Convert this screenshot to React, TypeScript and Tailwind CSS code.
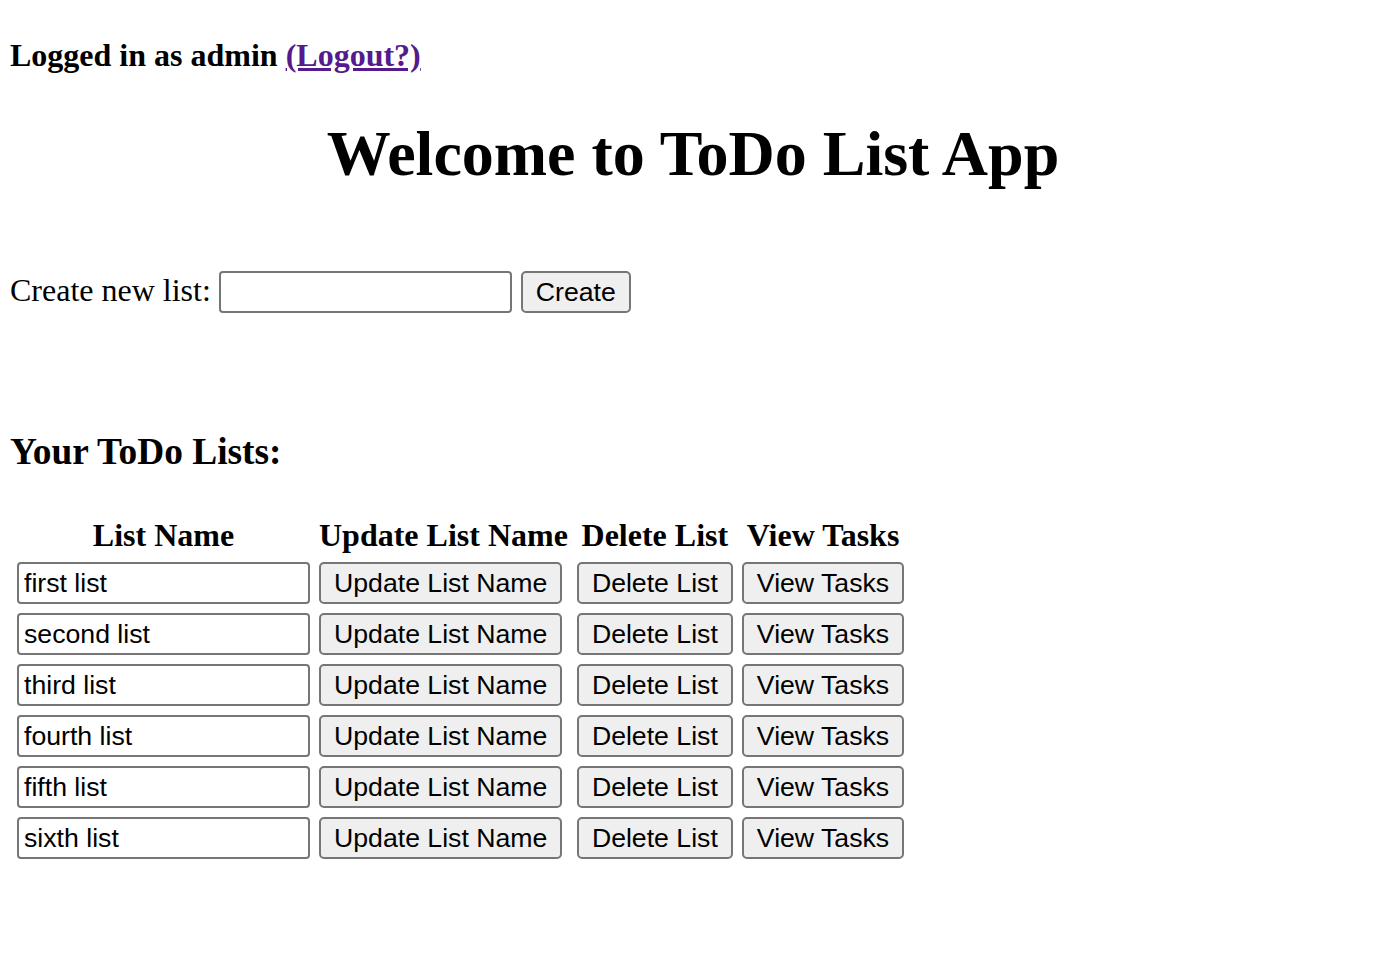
import React from 'react'

const lists = ['first list', 'second list', 'third list', 'fourth list', 'fifth list', 'sixth list']

const serif = "font-['Liberation_Serif','Times_New_Roman',serif]"
const sans = "font-['Liberation_Sans',Arial,sans-serif]"

const btn =
  'h-[42px] px-[13px] rounded-[5px] border-2 border-[#767676] bg-[#efefef] text-[26.67px] leading-none text-black whitespace-nowrap ' +
  sans

function ListRow({ name }: { name: string }) {
  return (
    <tr>
      <td className="p-[2px]">
        <input
          defaultValue={name}
          className={'block h-[42px] w-[293px] rounded-[4px] border-2 border-[#767676] bg-white px-[5px] text-[26.67px] text-black outline-none ' + sans}
        />
      </td>
      <td className="p-[2px] text-left">
        <button className={btn}>Update List Name</button>
      </td>
      <td className="p-[2px] text-left">
        <button className={btn}>Delete List</button>
      </td>
      <td className="p-[2px] text-left">
        <button className={btn}>View Tasks</button>
      </td>
    </tr>
  )
}

export default function App() {
  return (
    <div className={'min-h-screen bg-white p-[10px] text-black ' + serif}>
      <h4 className="mt-[27px] text-[32px] font-bold leading-[36px]">
        Logged in as admin{' '}
        <a href="#" className="text-[#551a8b] underline">
          (Logout?)
        </a>
      </h4>

      <h1 className="mt-[45px] text-center text-[64px] font-bold leading-[72px]">Welcome to ToDo List App</h1>

      <div className="mt-[81px] flex items-center">
        <label className="pb-[4px] text-[32px] leading-[36px]">Create new list:</label>
        <input
          className={'ml-[8px] h-[42px] w-[293px] rounded-[4px] border-2 border-[#767676] bg-white px-[5px] text-[26.67px] outline-none ' + sans}
        />
        <button className={'ml-[9px] ' + btn}>Create</button>
      </div>

      <h3 className="mt-[118px] text-[37.4px] font-bold leading-[42px]">Your ToDo Lists:</h3>

      <table className="mt-[34px] border-separate border-spacing-[5px]">
        <thead>
          <tr className="text-[32px] font-bold leading-[39px]">
            <th className="px-[2px] pt-[4px] pb-0 text-center">List Name</th>
            <th className="px-[2px] pt-[4px] pb-0 text-center whitespace-nowrap">Update List Name</th>
            <th className="px-[2px] pt-[4px] pb-0 text-center whitespace-nowrap">Delete List</th>
            <th className="px-[2px] pt-[4px] pb-0 text-center whitespace-nowrap">View Tasks</th>
          </tr>
        </thead>
        <tbody>
          {lists.map((l) => (
            <ListRow key={l} name={l} />
          ))}
        </tbody>
      </table>
    </div>
  )
}
